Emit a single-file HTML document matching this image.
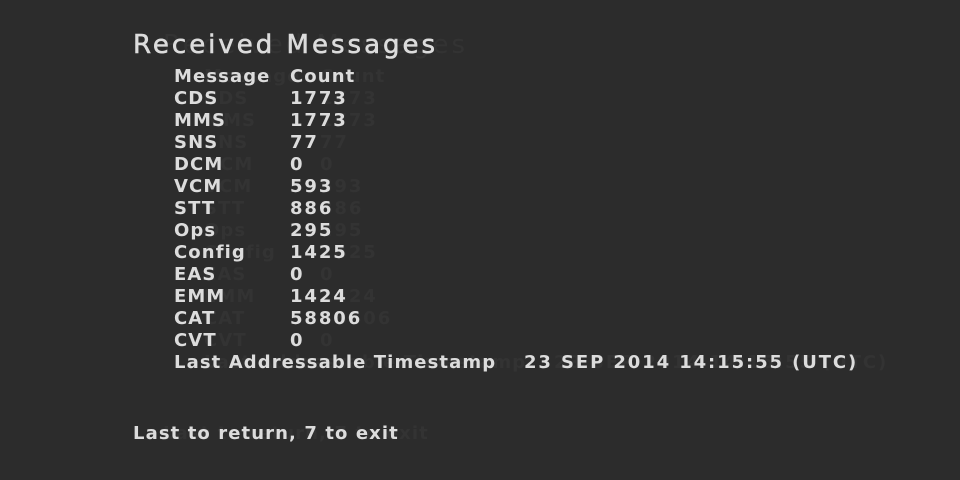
<!DOCTYPE html><html><head><style>
body{margin:0;width:960px;height:480px;background:#2c2c2c;overflow:hidden;font-family:"DejaVu Sans",sans-serif;color:#dcdcdc;position:relative}
.t{position:absolute;white-space:nowrap;text-shadow:30px 0 0 rgba(255,255,255,0.035);font-weight:bold;letter-spacing:1.1px}
.r{font-size:18px;line-height:22px}
.n{letter-spacing:1.9px}
</style></head><body>
<div class="t" style="left:133px;top:28px;font-size:26px;line-height:34px;letter-spacing:3px;font-weight:normal;-webkit-text-stroke:0.6px #dcdcdc">Received Messages</div>
<div class="t r" style="left:174px;top:66px">Message</div><div class="t r" style="left:290px;top:66px">Count</div>
<div class="t r" style="left:174px;top:88px">CDS</div><div class="t r n" style="left:290px;top:88px">1773</div>
<div class="t r" style="left:174px;top:110px">MMS</div><div class="t r n" style="left:290px;top:110px">1773</div>
<div class="t r" style="left:174px;top:132px">SNS</div><div class="t r n" style="left:290px;top:132px">77</div>
<div class="t r" style="left:174px;top:154px">DCM</div><div class="t r n" style="left:290px;top:154px">0</div>
<div class="t r" style="left:174px;top:176px">VCM</div><div class="t r n" style="left:290px;top:176px">593</div>
<div class="t r" style="left:174px;top:198px">STT</div><div class="t r n" style="left:290px;top:198px">886</div>
<div class="t r" style="left:174px;top:220px">Ops</div><div class="t r n" style="left:290px;top:220px">295</div>
<div class="t r" style="left:174px;top:242px">Config</div><div class="t r n" style="left:290px;top:242px">1425</div>
<div class="t r" style="left:174px;top:264px">EAS</div><div class="t r n" style="left:290px;top:264px">0</div>
<div class="t r" style="left:174px;top:286px">EMM</div><div class="t r n" style="left:290px;top:286px">1424</div>
<div class="t r" style="left:174px;top:308px">CAT</div><div class="t r n" style="left:290px;top:308px">58806</div>
<div class="t r" style="left:174px;top:330px">CVT</div><div class="t r n" style="left:290px;top:330px">0</div>
<div class="t r" style="left:174px;top:352px">Last Addressable Timestamp</div><div class="t r n" style="left:524px;top:352px">23 SEP 2014 14:15:55 (UTC)</div>
<div class="t r" style="left:133px;top:423px">Last to return, 7 to exit</div>
</body></html>
